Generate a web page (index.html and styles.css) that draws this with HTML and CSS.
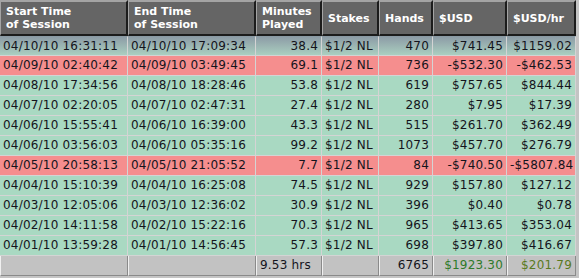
FILE: index.html
```html
<!DOCTYPE html>
<html>
<head>
<meta charset="utf-8">
<link rel="stylesheet" href="styles.css">
</head>
<body>
<div class="wrap">
<table class="grid">
  <colgroup>
    <col class="c1"><col class="c2"><col class="c3"><col class="c4"><col class="c5"><col class="c6"><col class="c7">
  </colgroup>
  <thead>
    <tr>
      <th>Start Time<br>of Session</th>
      <th>End Time<br>of Session</th>
      <th>Minutes<br>Played</th>
      <th>Stakes</th>
      <th>Hands</th>
      <th>$USD</th>
      <th>$USD/hr</th>
    </tr>
  </thead>
  <tbody>
    <tr class="sel"><td>04/10/10 16:31:11</td><td>04/10/10 17:09:34</td><td class="n">38.4</td><td>$1/2 NL</td><td class="n">470</td><td class="n">$741.45</td><td class="n">$1159.02</td></tr>
    <tr class="loss"><td>04/09/10 02:40:42</td><td>04/09/10 03:49:45</td><td class="n">69.1</td><td>$1/2 NL</td><td class="n">736</td><td class="n">-$532.30</td><td class="n">-$462.53</td></tr>
    <tr class="win"><td>04/08/10 17:34:56</td><td>04/08/10 18:28:46</td><td class="n">53.8</td><td>$1/2 NL</td><td class="n">619</td><td class="n">$757.65</td><td class="n">$844.44</td></tr>
    <tr class="win"><td>04/07/10 02:20:05</td><td>04/07/10 02:47:31</td><td class="n">27.4</td><td>$1/2 NL</td><td class="n">280</td><td class="n">$7.95</td><td class="n">$17.39</td></tr>
    <tr class="win"><td>04/06/10 15:55:41</td><td>04/06/10 16:39:00</td><td class="n">43.3</td><td>$1/2 NL</td><td class="n">515</td><td class="n">$261.70</td><td class="n">$362.49</td></tr>
    <tr class="win"><td>04/06/10 03:56:03</td><td>04/06/10 05:35:16</td><td class="n">99.2</td><td>$1/2 NL</td><td class="n">1073</td><td class="n">$457.70</td><td class="n">$276.79</td></tr>
    <tr class="loss"><td>04/05/10 20:58:13</td><td>04/05/10 21:05:52</td><td class="n">7.7</td><td>$1/2 NL</td><td class="n">84</td><td class="n">-$740.50</td><td class="n">-$5807.84</td></tr>
    <tr class="win"><td>04/04/10 15:10:39</td><td>04/04/10 16:25:08</td><td class="n">74.5</td><td>$1/2 NL</td><td class="n">929</td><td class="n">$157.80</td><td class="n">$127.12</td></tr>
    <tr class="win"><td>04/03/10 12:05:06</td><td>04/03/10 12:36:02</td><td class="n">30.9</td><td>$1/2 NL</td><td class="n">396</td><td class="n">$0.40</td><td class="n">$0.78</td></tr>
    <tr class="win"><td>04/02/10 14:11:58</td><td>04/02/10 15:22:16</td><td class="n">70.3</td><td>$1/2 NL</td><td class="n">965</td><td class="n">$413.65</td><td class="n">$353.04</td></tr>
    <tr class="win"><td>04/01/10 13:59:28</td><td>04/01/10 14:56:45</td><td class="n">57.3</td><td>$1/2 NL</td><td class="n">698</td><td class="n">$397.80</td><td class="n">$416.67</td></tr>
  </tbody>
  <tfoot>
    <tr><td></td><td></td><td>9.53 hrs</td><td></td><td class="n">6765</td><td class="n money">$1923.30</td><td class="n money2">$201.79</td></tr>
  </tfoot>
</table>
</div>
</body>
</html>
```

FILE: styles.css
```css
html, body {
  margin: 0;
  padding: 0;
  background: #c4c4c4;
}
.wrap {
  width: 579px;
  height: 278px;
  overflow: hidden;
  background: #c4c4c4;
}
.grid {
  border-collapse: separate;
  border-spacing: 0;
  table-layout: fixed;
  width: 576px;
  font-family: "DejaVu Sans", Verdana, sans-serif;
  font-size: 12px;
  letter-spacing: 0.2px;
  color: #14141c;
}
.c1 { width: 128px; }
.c2 { width: 128px; }
.c3 { width: 66px; }
.c4 { width: 57px; }
.c5 { width: 54px; }
.c6 { width: 74px; }
.c7 { width: 69px; }

thead th {
  box-sizing: border-box;
  height: 36px;
  padding: 0 2px 0 5px;
  background: #656565;
  color: #ffffff;
  font-size: 11px;
  font-weight: bold;
  letter-spacing: 0;
  line-height: 13px;
  text-align: left;
  vertical-align: middle;
  border-top: 2px solid #a4a4a4;
  border-left: 1px solid #a4a4a4;
  border-right: 2px solid #1c1c1c;
  border-bottom: 2px solid #1c1c1c;
  white-space: nowrap;
}

tbody td {
  height: 19px;
  padding: 0 3px;
  border-right: 1px solid #d4d4d4;
  border-bottom: 1px solid #d4d4d4;
  white-space: nowrap;
  overflow: hidden;
  vertical-align: middle;
  line-height: 19px;
}
tbody tr:first-child td { border-top: 1px solid #8a9aa4; height: 18px; line-height: 18px; }
.win td { background: #a9d9c2; }
.loss td { background: #f58e8e; }
.sel td { background: linear-gradient(#8d9ca6, #aacfc0); }
td.n { text-align: right; }

tfoot td {
  height: 19px;
  padding: 0 3px;
  background: #c2c2c2;
  border-left: 1px solid #f0f0f0;
  border-right: 1px solid #8a8a8a;
  border-bottom: 1px solid #8a8a8a;
  white-space: nowrap;
  vertical-align: middle;
  line-height: 19px;
  color: #14141c;
}
tfoot td.money { color: #2f7a2a; }
tfoot td.money2 { color: #5a7a1e; }
```
